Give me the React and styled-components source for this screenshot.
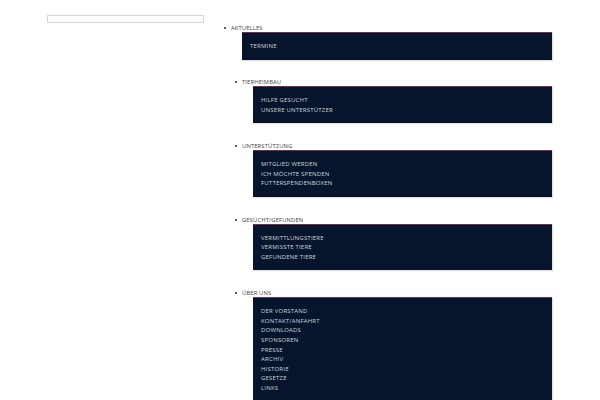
import React from "react";
import styled, { createGlobalStyle } from "styled-components";

const Global = createGlobalStyle`
  html, body { margin: 0; padding: 0; background: #fff; }
  body { font-family: "Open Sans", "Liberation Sans", sans-serif; }
`;

const Page = styled.div`
  display: flex;
  align-items: flex-start;
  width: 600px;
  height: 400px;
  overflow: hidden;
`;

const Side = styled.div`
  width: 220px;
  padding: 15px 0 0 47px;
  box-sizing: border-box;
  flex-shrink: 0;
`;

const Search = styled.input`
  display: block;
  width: 157px;
  height: 8px;
  margin: 0;
  padding: 0;
  border: 1px solid #d6d6d6;
  box-sizing: border-box;
  background: #fff;
`;

const Nav = styled.ul`
  list-style: none;
  margin: 0;
  padding: 24px 0 0 0;
  width: 332px;
  display: flex;
  flex-direction: column;
  gap: 18.6px;
`;

const Item = styled.li`
  margin-left: ${(p) => (p.$first ? 0 : 11)}px;
`;

const Label = styled.div`
  position: relative;
  height: 8px;
  line-height: 8px;
  padding-left: 11px;
  font-size: 5.8px;
  letter-spacing: 0.15px;
  color: #444;
  text-transform: uppercase;
  white-space: nowrap;
  &::before {
    content: "";
    position: absolute;
    left: 4px;
    top: 3px;
    width: 2px;
    height: 2px;
    border-radius: 50%;
    background: #222;
  }
`;

const Sub = styled.ul`
  list-style: none;
  margin: 0 0 0 22px;
  padding: 9px 0 8px 8px;
  background: #06152b;
  border-top: 1px solid #7a2b48;
  box-shadow: 1px 1px 1px rgba(0, 0, 0, 0.12);
`;

const SubItem = styled.li`
  height: 9.625px;
  line-height: 9.625px;
  font-size: 6px;
  letter-spacing: 0.2px;
  color: #cdd2da;
  text-transform: uppercase;
  white-space: nowrap;
`;

const menu = [
  { label: "Aktuelles", items: ["Termine"] },
  { label: "Tierheimbau", items: ["Hilfe gesucht", "Unsere Unterstützer"] },
  {
    label: "Unterstützung",
    items: ["Mitglied werden", "Ich möchte spenden", "Futterspendenboxen"],
  },
  {
    label: "Gesucht/Gefunden",
    items: ["Vermittlungstiere", "Vermisste Tiere", "Gefundene Tiere"],
  },
  {
    label: "Über uns",
    items: [
      "Der Vorstand",
      "Kontakt/Anfahrt",
      "Downloads",
      "Sponsoren",
      "Presse",
      "Archiv",
      "Historie",
      "Gesetze",
      "Links",
    ],
  },
];

export default function App() {
  return (
    <Page>
      <Global />
      <Side>
        <Search type="text" />
      </Side>
      <Nav>
        {menu.map((m, i) => (
          <Item key={m.label} $first={i === 0}>
            <Label>{m.label}</Label>
            <Sub>
              {m.items.map((s) => (
                <SubItem key={s}>{s}</SubItem>
              ))}
            </Sub>
          </Item>
        ))}
      </Nav>
    </Page>
  );
}
